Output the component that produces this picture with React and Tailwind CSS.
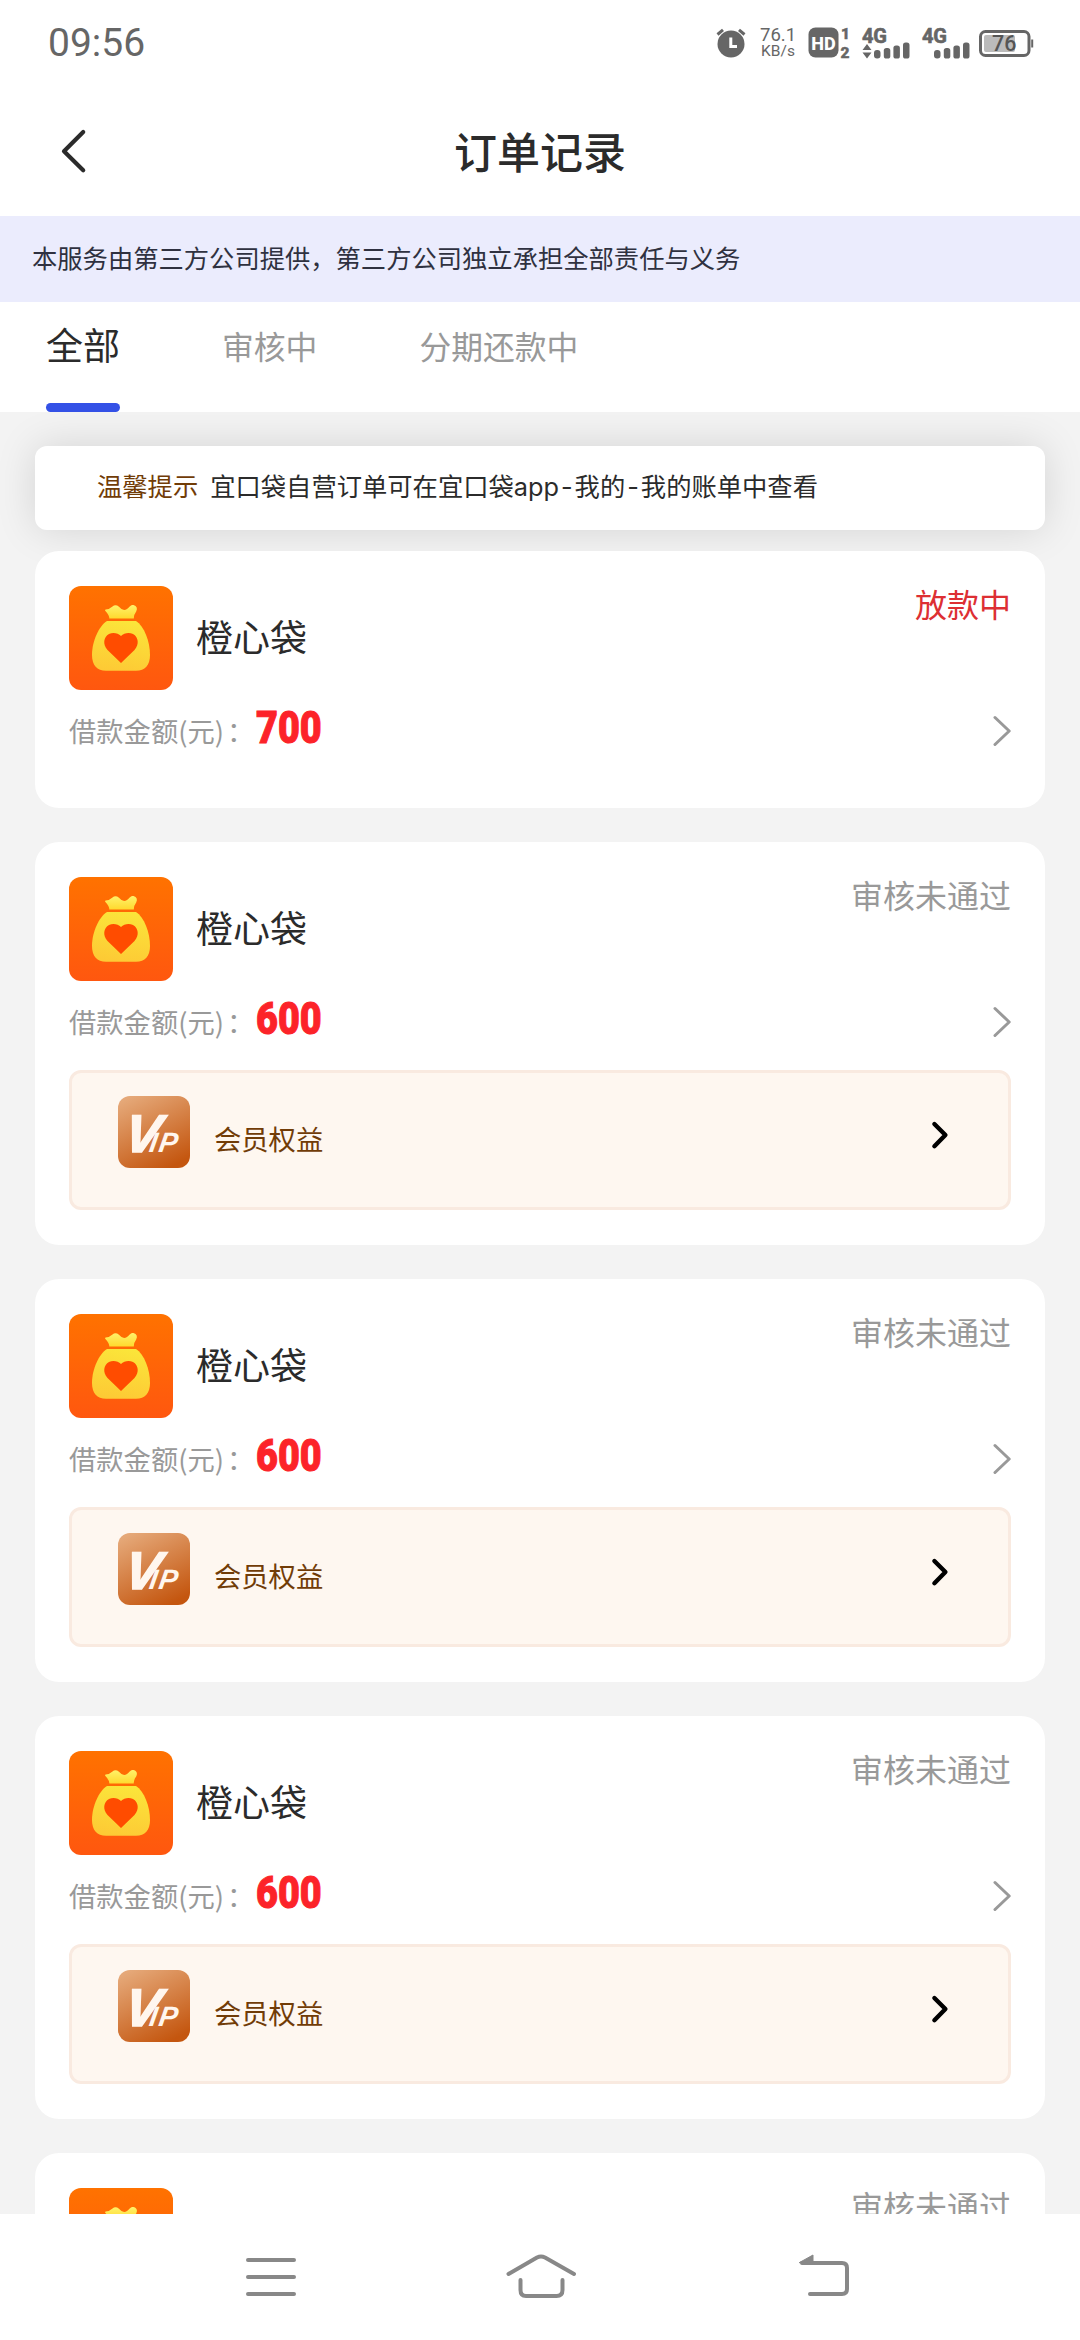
const orders = [
  { id: 1, name: '橙心袋', status: '放款中', amount: 700, active: true, vip: false },
  { id: 2, name: '橙心袋', status: '审核未通过', amount: 600, active: false, vip: true },
  { id: 3, name: '橙心袋', status: '审核未通过', amount: 600, active: false, vip: true },
  { id: 4, name: '橙心袋', status: '审核未通过', amount: 600, active: false, vip: true },
  { id: 5, name: '橙心袋', status: '审核未通过', amount: 600, active: false, vip: true },
];

function Signal({ data }) {
  return (
    <svg className="w-12 h-8 overflow-visible" viewBox="0 0 48 32" fill="#666">
      <text x="0" y="16" fontSize="20" fontWeight="700" fontFamily="Roboto, sans-serif" textLength="25" stroke="#666" strokeWidth="0.6">4G</text>
      {data && <path d="M0.5 23 L5 17 L9.5 23 Z M0.5 25.5 L5 31.5 L9.5 25.5 Z" />}
      <rect x="12" y="23" width="6.5" height="8.5" rx="3" />
      <rect x="21.8" y="21" width="6.5" height="10.5" rx="2.6" />
      <rect x="31.4" y="18.5" width="6.5" height="13" rx="2.6" />
      <rect x="41" y="15.5" width="6.5" height="16" rx="2.6" />
    </svg>
  );
}

function StatusBar() {
  return (
    <div className="h-[86px] shrink-0 flex items-center pl-12 pr-[46px] text-[#666] font-[Roboto,sans-serif]">
      <span className="text-[39px] leading-[86px] flex-1">09:56</span>

      {/* ALARM */}
      <svg className="w-[30px] h-[30px]" viewBox="0 0 30 30">
        <circle cx="15" cy="16" r="13.5" fill="#666" />
        <path d="M1.5 6.5 L7 1.8 M28.5 6.5 L23 1.8" stroke="#666" strokeWidth="3" />
        <path d="M14.8 9.5 V18.5 H21" fill="none" stroke="#fff" strokeWidth="3" />
      </svg>

      {/* NETWORK SPEED */}
      <div className="ml-3.5 w-9 flex flex-col text-center whitespace-nowrap">
        <span className="text-[18.5px] leading-[17px]">76.1</span>
        <span className="text-[15.5px] leading-[15px]">KB/s</span>
      </div>

      {/* HD VOICE */}
      <svg className="ml-3 w-[44px] h-8 overflow-visible" viewBox="0 0 44 32">
        <rect x="0.5" y="0.5" width="30" height="30" rx="7" fill="#666" />
        <text x="3.2" y="22.5" fontSize="19" fontWeight="800" fontFamily="Roboto, sans-serif" fill="#fff" textLength="24.5" lengthAdjust="spacingAndGlyphs">HD</text>
        <g fontSize="15.5" fontWeight="800" fontFamily="Roboto, sans-serif" fill="#666" stroke="#666" strokeWidth="0.5">
          <text x="33" y="12">1</text>
          <text x="32.5" y="30.8">2</text>
        </g>
      </svg>

      <div className="ml-2.5 flex gap-3">
        <Signal data />
        <Signal />
      </div>

      {/* BATTERY */}
      <svg className="ml-[9px] w-[55px] h-7 overflow-visible" viewBox="0 0 55 28">
        <rect x="1.5" y="2.5" width="48.5" height="24" rx="5" fill="none" stroke="#666" strokeWidth="3" />
        <rect x="5" y="6" width="31" height="17" rx="2" fill="#bbb" />
        <rect x="52.2" y="10.5" width="2" height="8" fill="#666" />
        <text x="13" y="22.3" fontSize="21.5" fontWeight="500" fontFamily="Roboto, sans-serif" fill="#555">76</text>
      </svg>
    </div>
  );
}

function Header() {
  return (
    <header className="h-[130px] shrink-0 grid grid-cols-[1fr_auto_1fr] items-center px-[60px]">
      <svg className="w-7 h-[46px]" viewBox="0 0 28 46" fill="none" stroke="#2b2b2b" strokeWidth="4.2" strokeLinecap="round" strokeLinejoin="round">
        <path d="M23.2 4 L4 23.2 L23.2 42.2" />
      </svg>
      <h1 className="text-[43px] leading-[60px] pb-[3px] font-medium text-[#2b2b2b]">订单记录</h1>
    </header>
  );
}

function Tabs() {
  return (
    <div className="h-[110px] shrink-0 flex bg-white pl-[46px] text-[#999] text-[31.8px] leading-[86px]">
      <div className="flex flex-col justify-between items-center text-[#2b2b2b] text-[37px] leading-[84px]">
        <span>全部</span>
        <span className="h-[9px] w-full rounded-full bg-[#3451e6]" />
      </div>
      <span className="ml-[102px]">审核中</span>
      <span className="ml-[102px]">分期还款中</span>
    </div>
  );
}

function BagLogo() {
  return (
    <svg className="w-[104px] h-[104px] rounded-xl" viewBox="0 0 104 104">
      <defs>
        <linearGradient id="bagBg" x1="0" y1="0" x2="0" y2="1">
          <stop offset="0" stopColor="#ff7200" />
          <stop offset="1" stopColor="#ff570f" />
        </linearGradient>
        <linearGradient id="bagBody" x1="0.6" y1="0" x2="0.4" y2="1">
          <stop offset="0" stopColor="#fbe53a" />
          <stop offset="1" stopColor="#fdca35" />
        </linearGradient>
        <linearGradient id="bagTop" x1="0" y1="0" x2="0" y2="1">
          <stop offset="0" stopColor="#fff26a" />
          <stop offset="1" stopColor="#ffd92e" />
        </linearGradient>
      </defs>
      <rect width="104" height="104" fill="url(#bagBg)" />
      <path d="M36.5 23.5 Q41 23 43.5 20.5 Q46.5 18 50 20.8 Q54 25.8 58 23 C61 21 61 19 64.5 19 Q69.5 20.5 67.2 25.5 Q64.5 29 64.8 32.5 H40.3 Q40.6 29.5 36 24.5 Z" fill="url(#bagTop)" />
      <path d="M38 35 H67 C75 40 81 55 81 69 C81 79 76 84.8 67 84.8 H37 C28 84.8 23 79 23 69 C23 55 30 40 38 35 Z" fill="url(#bagBody)" />
      <path d="M52 77 L38.5 64 C33.5 58.5 34.5 51 40 48 C44 46.3 49 47 52 50 C55 47 60 46.3 64 48 C69.5 51 70.5 58.5 65.5 64 Z" fill="#ff4c00" />
    </svg>
  );
}

function VipLogo() {
  return (
    <svg className="w-[72px] h-[72px] rounded-xl" viewBox="0 0 72 72">
      <defs>
        <linearGradient id="vipBg" x1="0.2" y1="0" x2="0.7" y2="1">
          <stop offset="0" stopColor="#e5a878" />
          <stop offset="1" stopColor="#c4560f" />
        </linearGradient>
      </defs>
      <rect width="72" height="72" fill="url(#vipBg)" />
      <text
        transform="translate(4.5 55.5) skewX(-9)"
        fontSize="53"
        fontWeight="700"
        fontStyle="italic"
        fontFamily="'Liberation Sans', sans-serif"
        fill="#fff6ee"
        stroke="#fff6ee"
        strokeWidth="1.6"
      >
        V<tspan dx="-9.5" fontSize="28" strokeWidth="0" letterSpacing="1.5">IP</tspan>
      </text>
    </svg>
  );
}

function VipRow() {
  return (
    <div className="mt-[15px] h-[140px] flex items-start rounded-xl border-[3px] border-[#f9eae0] bg-[#fef7f0] pl-[46px] pt-[23px] pr-[59px]">
      <VipLogo />
      <span className="ml-6 mt-5 flex-1 text-[27.3px] leading-[44px] text-[#713c07]">会员权益</span>
      <svg className="mt-[23px] w-5 h-8" viewBox="0 0 20 32" fill="none" stroke="#000" strokeWidth="4.4" strokeLinecap="round" strokeLinejoin="round">
        <path d="M5.4 5 L16.4 16 L5.4 27.2" />
      </svg>
    </div>
  );
}

function OrderCard({ order }) {
  return (
    <div className={`shrink-0 rounded-3xl bg-white px-[34px] pt-[35px] ${order.vip ? 'h-[403px]' : 'h-[257px]'}`}>
      <div className="flex items-start">
        <BagLogo />
        <span className="ml-[23px] flex-1 text-[37px] leading-[100px] text-[#2b2b2b]">{order.name}</span>
        <span className={`text-[32px] leading-[34px] ${order.active ? 'text-[#dd2f33]' : 'text-[#999]'}`}>{order.status}</span>
      </div>
      <div className="h-[74px] flex items-center">
        <span className="w-[187px] whitespace-nowrap text-[27.3px] leading-[74px] pt-[6px] text-[#999]">
          借款金额(元)<span className="ml-[3px]">：</span>
        </span>
        <span className="flex-1 origin-left scale-x-[0.84] pt-[2px] font-[Roboto,sans-serif] text-[45px] leading-[74px] font-black text-[#fc2329] [-webkit-text-stroke:1px_#fc2329]">
          {order.amount}
        </span>
        <svg className="w-5 h-9 mt-2" viewBox="0 0 20 36" fill="none" stroke="#999" strokeWidth="3" strokeLinecap="round" strokeLinejoin="round">
          <path d="M4 4.5 L18.2 18 L4 31.5" />
        </svg>
      </div>
      {order.vip && <VipRow />}
    </div>
  );
}

function NavBar() {
  return (
    <nav className="h-[126px] shrink-0 flex bg-white pt-9 pl-[244px]">
      <svg className="w-[54px] h-[54px]" viewBox="0 0 54 54" fill="none" stroke="#888" strokeWidth="4" strokeLinecap="round">
        <path d="M4 10 H50 M4 27 H50 M4 44 H50" />
      </svg>
      <svg className="ml-[207px] w-[72px] h-[54px]" viewBox="0 0 72 54" fill="none" stroke="#888" strokeWidth="4" strokeLinecap="round" strokeLinejoin="round">
        <path d="M3.5 24 L32 7.5 Q36 5.5 40 7.5 L69 24" />
        <path d="M15.5 30 V40 Q15.5 46 21 46 H51.5 Q57.5 46 57.5 40 V30" />
      </svg>
      <svg className="ml-[221px] w-[54px] h-[54px]" viewBox="0 0 54 54" fill="none" stroke="#888" strokeWidth="4" strokeLinecap="round" strokeLinejoin="round">
        <path d="M4 13 H44 Q49 13 49 18 V39 Q49 44 44 44 H12" />
        <path d="M1.5 12.5 L15 5 V13 Z" fill="#888" strokeWidth="1" />
      </svg>
    </nav>
  );
}

// latin part of the tip, set a little wider than the chinese text
function Latin({ children }) {
  return <span className="font-[Inter,sans-serif]">{children}</span>;
}

export default function App() {
  return (
    <div className="w-[1080px] h-[2340px] flex flex-col overflow-hidden bg-white font-['Noto_Sans_CJK_SC',sans-serif]">
      <StatusBar />
      <Header />
      <div className="h-[86px] shrink-0 bg-[#ebecfd] pl-8 text-[25.3px] leading-[82px] text-[#2f3140]">
        本服务由第三方公司提供，第三方公司独立承担全部责任与义务
      </div>
      <Tabs />

      <main className="flex-1 min-h-0 overflow-hidden flex flex-col bg-[#f3f3f3] px-[35px] pt-[34px]">
        <div className="h-[84px] shrink-0 rounded-xl bg-white pl-[62px] text-[25.3px] leading-[79px] text-[#2b2b2b] shadow-[0_0_40px_rgba(0,0,0,0.13)]">
          <span className="text-[#713c07] mr-3">温馨提示</span>
          宜口袋自营订单可在宜口袋<Latin>app</Latin>
          <span className="px-0.5"><Latin>-</Latin></span>我的
          <span className="px-0.5"><Latin>-</Latin></span>我的账单中查看
        </div>
        <div className="relative mt-[21px] flex flex-col gap-[34px]">
          {orders.map((order) => (
            <OrderCard key={order.id} order={order} />
          ))}
        </div>
      </main>

      <NavBar />
    </div>
  );
}
